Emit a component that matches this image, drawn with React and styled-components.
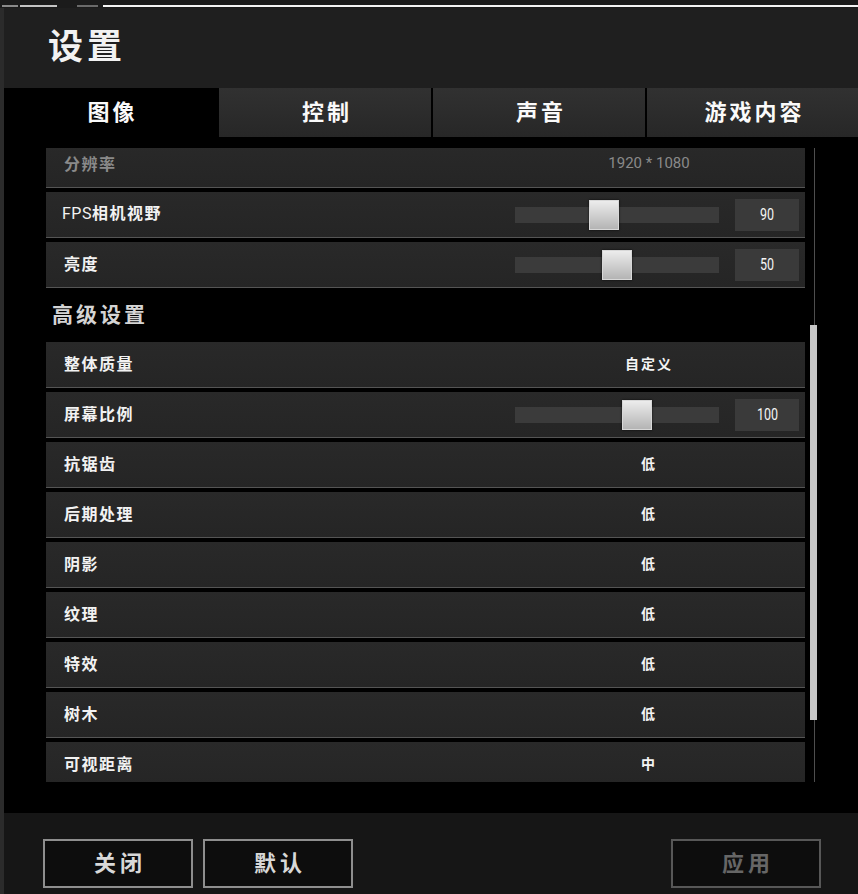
import React from 'react';
import styled, { createGlobalStyle } from 'styled-components';

const GlobalStyle = createGlobalStyle`
    html, body {
        margin: 0;
        padding: 0;
        background: #2b2b2b;
        overflow: hidden;
    }
    * {
        box-sizing: border-box;
    }
`

const CJK = `"Noto Sans CJK SC", "Noto Sans", sans-serif`;
const NUM = `Roboto, "Noto Sans CJK SC", sans-serif`;

const Page = styled.div`
    width: 858px;
    height: 894px;
    display: flex;
    flex-direction: column;
    font-family: ${CJK};
`
const TopStrip = styled.div`
    height: 8px;
    background: #1b1b1b;
    display: flex;
    align-items: flex-end;
    padding-bottom: 1px;
    padding-left: 2px;
`
const StripBit = styled.div`
    height: 2px;
    width: ${p => p.w}px;
    margin-left: ${p => p.gap || 0}px;
    background: ${p => p.tone};
    flex: ${p => p.grow ? 1 : 'none'};
`
const Window = styled.div`
    flex: 1;
    margin-left: 4px;
    display: flex;
    flex-direction: column;
    min-height: 0;
`
const Header = styled.div`
    height: 80px;
    background: #1f1f1f;
    display: flex;
    align-items: center;
    padding: 0 0 9px 44px;
`
const Title = styled.h1`
    margin: 0;
    color: #f2f2f2;
    font-size: 35px;
    font-weight: 700;
    letter-spacing: 4px;
    line-height: 1;
`
const Tabs = styled.div`
    height: 49px;
    display: grid;
    grid-template-columns: 213px 212px 212px 1fr;
    gap: 2px;
    background: #000;
`
const Tab = styled.div`
    display: flex;
    align-items: center;
    justify-content: center;
    padding: 0 0 6px 4px;
    color: #fafafa;
    font-size: 22px;
    font-weight: 700;
    letter-spacing: 3px;
    line-height: 1;
    background: ${p => p.active ? '#000' : 'linear-gradient(#313131, #272727)'};
`
const Content = styled.div`
    flex: 1;
    background: #000;
    display: flex;
    padding: 11px 0 31px 42px;
    gap: 5px;
    min-height: 0;
`
const Viewport = styled.div`
    width: 759px;
    overflow: hidden;
`
const List = styled.div`
    display: flex;
    flex-direction: column;
    gap: 4px;
    margin-top: -6px;
`
const Row = styled.div`
    height: 46px;
    flex: none;
    display: flex;
    align-items: center;
    background: linear-gradient(#292929, #252525);
    border-bottom: 1px solid #555;
    padding: 0 0 3px 18px;
`
const Label = styled.div`
    flex: 1;
    font-size: 16px;
    font-weight: 700;
    letter-spacing: 1.5px;
    line-height: 1;
    color: ${p => p.disabled ? '#8a8a8a' : '#f2f2f2'};
`
const Latin = styled.span`
    font-family: ${NUM};
    font-weight: 400;
    letter-spacing: 0.5px;
    margin-left: -2px;
`
const Value = styled.div`
    width: 312px;
    text-align: center;
    line-height: 1;
    font-size: ${p => p.num ? 15 : 14}px;
    font-family: ${p => p.num ? NUM : CJK};
    font-weight: ${p => p.num ? 400 : 700};
    letter-spacing: ${p => p.num ? 0 : 2}px;
    color: ${p => p.disabled ? '#8a8a8a' : '#f4f4f4'};
`
const SliderCell = styled.div`
    width: 290px;
    display: flex;
    align-items: center;
    gap: 16px;
    padding-right: 6px;
    margin-top: 3px;
`
const Track = styled.div`
    width: 204px;
    height: 16px;
    background: #3b3b3b;
    position: relative;
`
const Thumb = styled.div`
    position: absolute;
    top: -7px;
    width: 30px;
    height: 30px;
    background: linear-gradient(#ececec, #b4b4b4);
    border: 1px solid #d8d8d8;
    box-shadow: 0 0 2px rgba(0, 0, 0, 0.8);
`
const NumBox = styled.div`
    width: 64px;
    height: 32px;
    background: #3a3a3a;
    display: flex;
    align-items: center;
    justify-content: center;
`
const NumText = styled.span`
    display: inline-block;
    color: #f4f4f4;
    font-family: ${NUM};
    font-size: 16px;
    transform: scaleX(0.78);
`
const Section = styled.div`
    height: 46px;
    flex: none;
    display: flex;
    align-items: center;
    padding: 0 0 3px 6px;
    color: #d4d4d4;
    font-size: 21px;
    font-weight: 700;
    letter-spacing: 3px;
    line-height: 1;
`
const ScrollBar = styled.div`
    width: 7px;
    position: relative;
    &::before {
        content: '';
        position: absolute;
        left: 4px;
        top: 0;
        bottom: 0;
        width: 1px;
        background: #4e4e4e;
    }
`
const ScrollThumb = styled.div`
    position: relative;
    width: 7px;
    margin-top: ${p => p.top}px;
    height: ${p => p.size}px;
    background: #c6c6c6;
`
const Footer = styled.div`
    height: 81px;
    background: #161616;
    display: flex;
    align-items: flex-start;
    padding: 26px 37px 0 39px;
    gap: 10px;
`
const Button = styled.button`
    width: 150px;
    height: 49px;
    background: #0d0d0d;
    border: 2px solid ${p => p.disabled ? '#575757' : '#8e8e8e'};
    color: ${p => p.disabled ? '#666' : '#d8d8d8'};
    font-family: ${CJK};
    font-size: 22px;
    font-weight: 700;
    letter-spacing: 4px;
    line-height: 1;
    padding: 0 0 5px 4px;
    margin-left: ${p => p.push ? 'auto' : '0'};
`

const sliders = {
    fov: { pos: 0.425, value: 90 },
    bright: { pos: 0.5, value: 50 },
    scale: { pos: 0.615, value: 100 },
};

const quality = [
    ['抗锯齿', '低'],
    ['后期处理', '低'],
    ['阴影', '低'],
    ['纹理', '低'],
    ['特效', '低'],
    ['树木', '低'],
    ['可视距离', '中'],
];

function Slider({ pos, value }) {
    return (
        <SliderCell>
            <Track>
                <Thumb style={{ left: Math.round(pos * 174) }} />
            </Track>
            <NumBox><NumText>{value}</NumText></NumBox>
        </SliderCell>
    );
}

export default function App() {
    return (
        <Page>
            <GlobalStyle />
            <TopStrip>
                <StripBit w={16} tone="#8a8a8a" />
                <StripBit w={37} tone="#c4c4c4" gap={2} />
                <StripBit w={21} tone="#6a6a6a" gap={20} />
                <StripBit w={1} tone="#f4f4f4" gap={5} grow />
            </TopStrip>
            <Window>
                <Header>
                    <Title>设置</Title>
                </Header>
                <Tabs>
                    <Tab active>图像</Tab>
                    <Tab>控制</Tab>
                    <Tab>声音</Tab>
                    <Tab>游戏内容</Tab>
                </Tabs>
                <Content>
                    <Viewport>
                        <List>
                            <Row>
                                <Label disabled>分辨率</Label>
                                <Value num disabled>1920 * 1080</Value>
                            </Row>
                            <Row>
                                <Label><Latin>FPS</Latin>相机视野</Label>
                                <Slider {...sliders.fov} />
                            </Row>
                            <Row>
                                <Label>亮度</Label>
                                <Slider {...sliders.bright} />
                            </Row>
                            <Section>高级设置</Section>
                            <Row>
                                <Label>整体质量</Label>
                                <Value>自定义</Value>
                            </Row>
                            <Row>
                                <Label>屏幕比例</Label>
                                <Slider {...sliders.scale} />
                            </Row>
                            {quality.map(([name, val]) => (
                                <Row key={name}>
                                    <Label>{name}</Label>
                                    <Value>{val}</Value>
                                </Row>
                            ))}
                        </List>
                    </Viewport>
                    <ScrollBar>
                        <ScrollThumb top={177} size={395} />
                    </ScrollBar>
                </Content>
                <Footer>
                    <Button>关闭</Button>
                    <Button>默认</Button>
                    <Button push disabled>应用</Button>
                </Footer>
            </Window>
        </Page>
    );
}
